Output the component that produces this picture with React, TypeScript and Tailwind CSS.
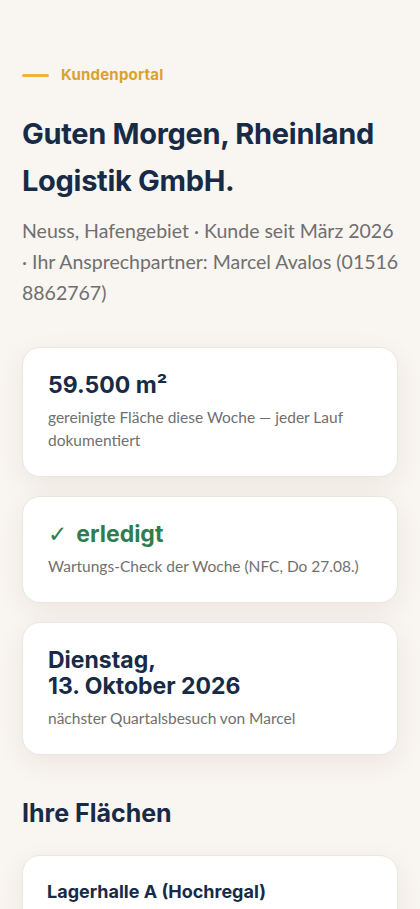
import React from "react";

const head = { fontFamily: "Inter, 'Liberation Sans', sans-serif" };
const body = { fontFamily: "Lato, 'Liberation Sans', sans-serif" };

function Card({ children }: { children: React.ReactNode }) {
  return (
    <div className="rounded-[18px] border border-[#ebe6df] bg-white px-[25px] py-[24px] shadow-[0_8px_28px_rgba(60,45,20,0.07)]">
      {children}
    </div>
  );
}

export default function App() {
  return (
    <div className="min-h-[909px] bg-[#f9f5f0] px-[22px] pt-[64px] pb-10" style={body}>
      <div className="flex items-center gap-[12px]">
        <div className="h-[3px] w-[27px] rounded-full bg-[#f0b43c]" />
        <span className="text-[15px] font-bold leading-[22px] tracking-[0.2px] text-[#d9a22e]" style={head}>
          Kundenportal
        </span>
      </div>

      <h1
        className="mt-[24px] text-[29px] font-bold leading-[47px] tracking-[-0.3px] text-[#172a46]"
        style={head}
      >
        Guten Morgen, Rheinland Logistik GmbH.
      </h1>

      <p className="mt-[11px] text-[19.5px] leading-[31px] text-[#6f6f6f]">
        <span className="block whitespace-nowrap">Neuss, Hafengebiet · Kunde seit März 2026</span>
        <span className="block whitespace-nowrap">· Ihr Ansprechpartner: Marcel Avalos (01516</span>
        <span className="block whitespace-nowrap">8862767)</span>
      </p>

      <div className="mt-[39px] flex flex-col gap-[19px]">
        <Card>
          <div className="text-[23px] font-bold leading-[26px] text-[#172a46]" style={head}>
            59.500 m²
          </div>
          <div className="mt-[8px] text-[15.5px] leading-[23px] text-[#707070]">
            gereinigte Fläche diese Woche — jeder Lauf dokumentiert
          </div>
        </Card>
        <Card>
          <div className="flex items-baseline text-[23px] font-bold leading-[26px] text-[#2e7d4f]" style={head}>
            <span className="mr-[9px] font-normal" style={{ fontFamily: "'DejaVu Sans', sans-serif" }}>
              ✓
            </span>
            erledigt
          </div>
          <div className="mt-[8px] text-[15.5px] leading-[23px] text-[#707070]">
            Wartungs-Check der Woche (NFC, Do 27.08.)
          </div>
        </Card>
        <Card>
          <div className="text-[23px] font-bold leading-[26px] text-[#172a46]" style={head}>
            Dienstag,
            <br />
            13. Oktober 2026
          </div>
          <div className="mt-[8px] text-[15.5px] leading-[23px] text-[#707070]">
            nächster Quartalsbesuch von Marcel
          </div>
        </Card>
      </div>

      <h2 className="mt-[41px] text-[25px] font-bold leading-[34px] text-[#172a46]" style={head}>
        Ihre Flächen
      </h2>

      <div className="mt-[25px] rounded-[18px] border border-[#ebe6df] bg-white px-[24px] py-[24px] shadow-[0_8px_28px_rgba(60,45,20,0.07)]">
        <div className="text-[18px] font-bold leading-[24px] text-[#172a46]" style={head}>
          Lagerhalle A (Hochregal)
        </div>
        <div className="mt-[8px] text-[15.5px] leading-[23px] text-[#707070]">
          Hochregallager · 18.000 m²
        </div>
      </div>
    </div>
  );
}
